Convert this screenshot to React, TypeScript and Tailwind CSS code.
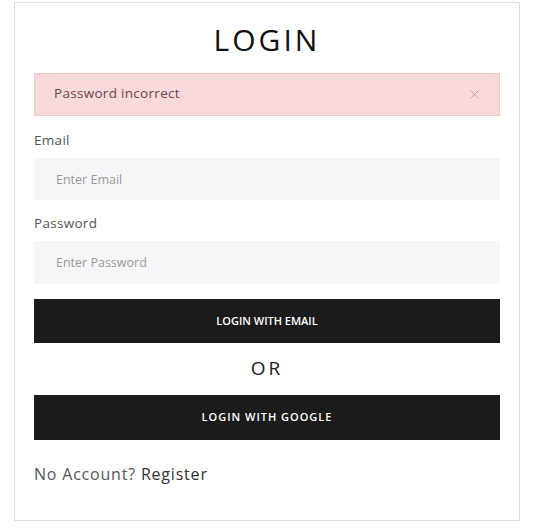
import { X } from 'lucide-react'

export default function App() {
  return (
    <div className="w-[545px] h-[529px] bg-white" style={{ fontFamily: '"Open Sans", "Noto Sans", sans-serif' }}>
      <div className="ml-[14px] mt-[2px] w-[506px] h-[519px] border border-[#dedede] px-[19px]">
        <h1 className="text-center text-[30px] leading-none tracking-[3px] text-[#111] mt-[22px] mb-[18px]">LOGIN</h1>

        {/* alerta */}
        <div className="flex items-center justify-between h-[43px] bg-[#f8d9da] border border-[#f3c8cb] pl-[19px] pr-[17px]">
          <span className="text-[13.5px] tracking-[0.3px] text-[#6d4452] -mt-[2px]">Password incorrect</span>
          <X className="w-[15px] h-[15px] text-[#b4949a]" strokeWidth={1.3} />
        </div>

        <label className="block mt-[14px] text-[13.5px] tracking-[0.3px] text-[#555] leading-[20px]">Email</label>
        <input
          type="email"
          placeholder="Enter Email"
          className="mt-[8px] w-full h-[42px] bg-[#f6f6f8] px-[22px] text-[12.5px] outline-none placeholder:text-[#9a9a9a]"
        />

        <label className="block mt-[13px] text-[13.5px] tracking-[0.3px] text-[#555] leading-[20px]">Password</label>
        <input
          type="password"
          placeholder="Enter Password"
          className="mt-[8px] w-full h-[43px] bg-[#f6f6f8] px-[22px] text-[12.5px] outline-none placeholder:text-[#9a9a9a]"
        />

        <button className="mt-[15px] w-full h-[44px] bg-[#1b1b1b] text-white text-[11px] font-semibold">
          LOGIN WITH EMAIL
        </button>

        <div className="text-center text-[19px] tracking-[3px] text-[#222] mt-[13px] mb-[15px] leading-[24px]">OR</div>

        <button className="w-full h-[45px] bg-[#1b1b1b] text-white text-[11px] font-semibold tracking-[1px]">
          LOGIN WITH GOOGLE
        </button>

        <p className="mt-[23px] text-[16px] tracking-[0.8px] leading-[22px]">
          <span className="text-[#555]">No Account? </span>
          <a href="#" className="text-[#333]">Register</a>
        </p>
      </div>
    </div>
  )
}
